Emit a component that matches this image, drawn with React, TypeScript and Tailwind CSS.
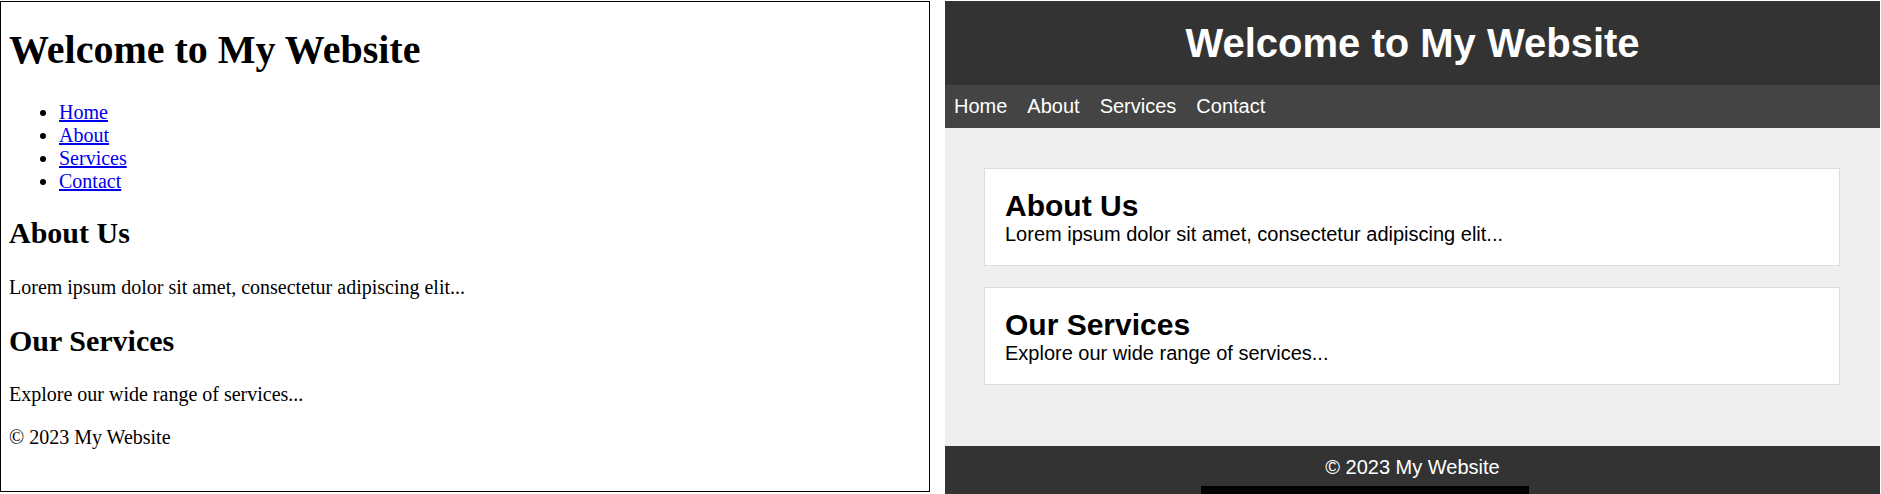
import React from "react";

const serif = { fontFamily: '"Liberation Serif", "Times New Roman", serif' };

function PlainPage() {
  return (
    <div
      className="w-[930px] h-[491px] shrink-0 border border-black bg-white pl-[8px] text-black overflow-hidden"
      style={serif}
    >
      <h1 className="mt-[25px] text-[40px] leading-[46px] font-bold">Welcome to My Website</h1>
      <ul className="mt-[28px] list-disc pl-[50px] text-[20px] leading-[23px]">
        {["Home", "About", "Services", "Contact"].map((t) => (
          <li key={t}>
            <a href="#" className="text-[#0000ee] underline">
              {t}
            </a>
          </li>
        ))}
      </ul>
      <h2 className="mt-[23px] text-[30px] leading-[34.5px] font-bold">About Us</h2>
      <p className="mt-[25px] text-[20px] leading-[23px]">Lorem ipsum dolor sit amet, consectetur adipiscing elit...</p>
      <h2 className="mt-[25px] text-[30px] leading-[34.5px] font-bold">Our Services</h2>
      <p className="mt-[25px] text-[20px] leading-[23px]">Explore our wide range of services...</p>
      <p className="mt-[20px] text-[20px] leading-[23px]">© 2023 My Website</p>
    </div>
  );
}

function Card({ title, text }: { title: string; text: string }) {
  return (
    <section className="mb-[21px] border border-[#dddddd] bg-white px-[20px] pt-[19px] pb-[19px]">
      <h2 className="text-[30px] leading-[35px] font-bold text-black">{title}</h2>
      <p className="text-[20px] leading-[23px] text-black">{text}</p>
    </section>
  );
}

function StyledPage() {
  return (
    <div
      className="relative ml-[15px] flex h-[493px] w-[935px] shrink-0 flex-col overflow-hidden bg-[#efefef]"
      style={{ fontFamily: '"Liberation Sans", Arial, sans-serif' }}
    >
      <header className="bg-[#333333] py-[19px] text-center">
        <h1 className="text-[40px] leading-[46px] font-bold text-white">Welcome to My Website</h1>
      </header>
      <nav className="flex gap-[20px] bg-[#444444] py-[10px] pl-[9px] text-[20px] leading-[23px] text-white">
        <a href="#">Home</a>
        <a href="#">About</a>
        <a href="#">Services</a>
        <a href="#">Contact</a>
      </nav>
      <main className="pl-[39px] pr-[40px] pt-[40px] pb-[40px]">
        <Card title="About Us" text="Lorem ipsum dolor sit amet, consectetur adipiscing elit..." />
        <Card title="Our Services" text="Explore our wide range of services..." />
      </main>
      <footer className="flex-1 bg-[#333333] pt-[10px] text-center text-[20px] leading-[23px] text-white">
        <p>© 2023 My Website</p>
      </footer>
      <div className="absolute bottom-0 left-[256px] h-[8px] w-[328px] bg-black" />
    </div>
  );
}

export default function App() {
  return (
    <div className="flex h-[494px] w-[1881px] items-start bg-white pt-[1px]">
      <PlainPage />
      <StyledPage />
    </div>
  );
}
